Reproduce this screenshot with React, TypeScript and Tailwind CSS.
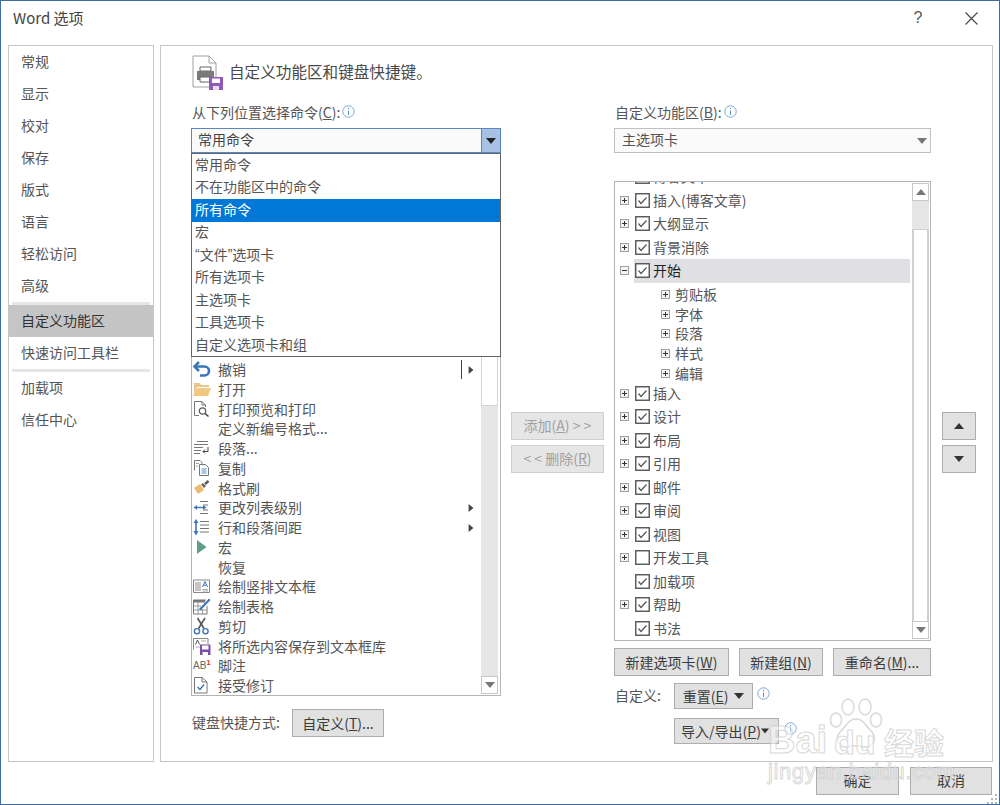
import type { ReactNode } from "react";

const sideTop = ["常规", "显示", "校对", "保存", "版式", "语言", "轻松访问", "高级"];

const dropItems: ReactNode[] = [
  "常用命令",
  "不在功能区中的命令",
  "所有命令",
  "宏",
  <>
    <span style={{ fontFamily: '"Liberation Sans", sans-serif' }}>“</span>文件
    <span style={{ fontFamily: '"Liberation Sans", sans-serif' }}>”</span>选项卡
  </>,
  "所有选项卡",
  "主选项卡",
  "工具选项卡",
  "自定义选项卡和组",
];

const hiddenRows = ["<分隔符>", "保存", "编号", "查看宏", "插入分页符和分节符", "插入图片", "插入文本框", "超链接", "查找"];

function Svg({ children }: { children: ReactNode }) {
  return (
    <svg width="20" height="19" viewBox="0 0 20 19" fill="none">
      {children}
    </svg>
  );
}

const icons: Record<string, ReactNode> = {
  undo: (
    <Svg>
      <path d="M7 2 L2.5 6.5 L7 11" stroke="#3a76b8" strokeWidth="2.6" />
      <path d="M3 6.5 H12.5 a4.4 4.4 0 0 1 0 9 H8" stroke="#3a76b8" strokeWidth="2.6" />
    </Svg>
  ),
  open: (
    <Svg>
      <path d="M2 5 L2 3 L8 3 L9 5 L17 5 L17 7 L5 7 L2 15 Z" fill="#e8c68e" />
      <path d="M5 8 L19 8 L16 16 L1 16 Z" fill="#f2c77f" />
    </Svg>
  ),
  preview: (
    <Svg>
      <path d="M2.5 15.5 V1.5 H10 L13.5 5 V7 M10 1.5 V5 H13.5 M2.5 15.5 H7" stroke="#777" />
      <circle cx="10.5" cy="11" r="3.2" stroke="#555" strokeWidth="1.2" />
      <path d="M13 13.5 L16.5 16.5" stroke="#444" strokeWidth="1.6" />
    </Svg>
  ),
  para: (
    <Svg>
      <path d="M5 2.5 H16 M2 5.5 H16 M2 8.5 H11 M2 11.5 H9 M2 14.5 H8" stroke="#777" />
      <path d="M16 8 V12.5 H11 M13 10.5 L11 12.5 L13 14.5" stroke="#444" />
    </Svg>
  ),
  copy: (
    <Svg>
      <path d="M2.5 11.5 V1.5 H8 L10 3.5 V5" stroke="#777" />
      <path d="M4 4.5 H7 M4 7 H6" stroke="#9a9a9a" />
      <path d="M7.5 16.5 V5.5 H13.5 L16.5 8.5 V16.5 Z" fill="#fff" stroke="#777" />
      <path d="M9.5 10 H14.5 M9.5 12 H14.5 M9.5 14 H14.5" stroke="#4f8dc9" />
    </Svg>
  ),
  brush: (
    <Svg>
      <path d="M2 9 L8 5 L12 11 L6 15 Z" fill="#ecbc6c" />
      <path d="M9 5.5 L12 9 L14 7 L11 4 Z" fill="#666" />
      <path d="M13 5 L16.5 2" stroke="#555" strokeWidth="2.4" />
    </Svg>
  ),
  level: (
    <Svg>
      <path d="M8 3.5 H16 M11 7 H16 M11 12 H16 M8 15.5 H16" stroke="#777" />
      <path d="M2 9.5 H14" stroke="#3a76b8" strokeWidth="1.4" />
      <path d="M5 7 L2 9.5 L5 12 Z M11 7 L14 9.5 L11 12 Z" fill="#3a76b8" />
    </Svg>
  ),
  spacing: (
    <Svg>
      <path d="M8 3.5 H17 M8 7 H17 M8 10.5 H17 M8 14 H17" stroke="#777" />
      <path d="M4 3 V16" stroke="#3a76b8" strokeWidth="1.6" />
      <path d="M1.5 5 L4 1 L6.5 5 Z M1.5 13 L4 17.5 L6.5 13 Z" fill="#3a76b8" />
    </Svg>
  ),
  macro: (
    <Svg>
      <path d="M5 2 L14.5 9 L5 16 Z" fill="#5f9f87" />
    </Svg>
  ),
  vtext: (
    <Svg>
      <path d="M1.5 3 H17.5 V15.5 H1.5 Z" fill="#fff" stroke="#888" />
      <path d="M4 5 V14 M6 5 V14 M8 5 V14" stroke="#8a8a8a" />
      <path d="M10.5 10 L13 4.5 L15.5 10 M11.5 8.2 H14.5" stroke="#3a76b8" />
      <path d="M10.5 12.5 H16 M10.5 14 H16" stroke="#aaa" />
    </Svg>
  ),
  table: (
    <Svg>
      <path d="M1.5 3 H14 M1.5 3 V17 H15 V9" stroke="#777" />
      <path d="M1.5 3 H13 V5.5 H1.5 Z" fill="#777" />
      <path d="M1.5 9 H9 M1.5 13 H15 M6 5 V17 M10.5 12 V17" stroke="#999" />
      <path d="M7 12 L17 1.5 L18.5 3 L8.5 13.5 Z" fill="#3a76b8" />
    </Svg>
  ),
  cut: (
    <Svg>
      <path d="M5.5 1 L12 11.5 M13 1 L6.5 11.5" stroke="#555" strokeWidth="1.6" />
      <circle cx="5" cy="14.2" r="2.6" stroke="#3a76b8" strokeWidth="1.4" />
      <circle cx="13.5" cy="14.2" r="2.6" stroke="#3a76b8" strokeWidth="1.4" />
    </Svg>
  ),
  saveSel: (
    <Svg>
      <path d="M1.5 12.5 V1.5 H16 V7" stroke="#888" />
      <path d="M3.5 7.5 L5.5 3 L7.5 7.5" stroke="#555" />
      <path d="M9 4 H14 M3.5 10 H8" stroke="#aaa" />
      <path d="M8 7.5 H18.5 V18 H8 Z" fill="#7b4fa3" />
      <path d="M10 8.5 H16.5 V12.5 H10 Z" fill="#fff" />
      <path d="M10.5 15 H16 V18 H10.5 Z" fill="#fff" />
    </Svg>
  ),
  accept: (
    <Svg>
      <path d="M2.5 17 V1.5 H10 L15 6 V17 Z" stroke="#777" />
      <path d="M10 1.5 V6 H15" stroke="#777" />
      <path d="M5.5 11 L8 13.5 L12 8.5" stroke="#3a76b8" strokeWidth="1.5" />
    </Svg>
  ),
};

type Cmd = { label: string; icon?: string; split?: boolean; arrow?: boolean; note?: boolean };

const commands: Cmd[] = [
  { label: "撤销", icon: "undo", split: true },
  { label: "打开", icon: "open" },
  { label: "打印预览和打印", icon: "preview" },
  { label: "定义新编号格式..." },
  { label: "段落...", icon: "para" },
  { label: "复制", icon: "copy" },
  { label: "格式刷", icon: "brush" },
  { label: "更改列表级别", icon: "level", arrow: true },
  { label: "行和段落间距", icon: "spacing", arrow: true },
  { label: "宏", icon: "macro" },
  { label: "恢复" },
  { label: "绘制竖排文本框", icon: "vtext" },
  { label: "绘制表格", icon: "table" },
  { label: "剪切", icon: "cut" },
  { label: "将所选内容保存到文本框库", icon: "saveSel" },
  { label: "脚注", note: true },
  { label: "接受修订", icon: "accept" },
];

const tabsTop = [
  { label: "插入(博客文章)", on: true },
  { label: "大纲显示", on: true },
  { label: "背景消除", on: true },
];

const tabsBottom = [
  { label: "插入", on: true, plus: true },
  { label: "设计", on: true, plus: true },
  { label: "布局", on: true, plus: true },
  { label: "引用", on: true, plus: true },
  { label: "邮件", on: true, plus: true },
  { label: "审阅", on: true, plus: true },
  { label: "视图", on: true, plus: true },
  { label: "开发工具", on: false, plus: true },
  { label: "加载项", on: true, plus: false },
  { label: "帮助", on: true, plus: true },
  { label: "书法", on: true, plus: false },
];

function Caret({ dir, color = "#444", size = 10 }: { dir: "up" | "down" | "right"; color?: string; size?: number }) {
  const d = dir === "up" ? "M0 8 L5 2 L10 8 Z" : dir === "down" ? "M0 2 L10 2 L5 8 Z" : "M2 0 L8 5 L2 10 Z";
  return (
    <svg width={size} height={size} viewBox="0 0 10 10">
      <path d={d} fill={color} />
    </svg>
  );
}

function Info() {
  return (
    <svg width="13" height="13" viewBox="0 0 13 13" fill="none" className="shrink-0">
      <circle cx="6.5" cy="6.5" r="5.7" stroke="#7da7d9" />
      <path d="M6.5 5.5 V10" stroke="#5f8fc9" />
      <path d="M6.5 3 V4.2" stroke="#5f8fc9" />
    </svg>
  );
}

function Expander({ open = false }: { open?: boolean }) {
  return (
    <svg width="9" height="9" viewBox="0 0 9 9" fill="none" className="shrink-0">
      <rect x="0.5" y="0.5" width="8" height="8" fill="#f4f4f4" stroke="#a0a0a0" />
      <path d="M2 4.5 H7" stroke="#333" />
      {!open && <path d="M4.5 2 V7" stroke="#333" />}
    </svg>
  );
}

function Check({ on }: { on: boolean }) {
  return (
    <svg width="15" height="15" viewBox="0 0 15 15" fill="none" className="shrink-0">
      <rect x="0.75" y="0.75" width="13.5" height="13.5" fill="#fff" stroke="#555" strokeWidth="1.4" />
      {on && <path d="M3.5 7.5 L6 10.5 L11.5 4.5" stroke="#555" strokeWidth="1.2" />}
    </svg>
  );
}

function TabRow({ label, on, plus }: { label: string; on: boolean; plus: boolean }) {
  return (
    <div className="flex items-center h-[23.5px] pl-[5px] shrink-0">
      <div className="w-[9px] shrink-0">{plus && <Expander />}</div>
      <div className="ml-[6px]">
        <Check on={on} />
      </div>
      <span className="ml-[3px] whitespace-nowrap">{label}</span>
    </div>
  );
}

function Btn({ className, children }: { className: string; children: ReactNode }) {
  return (
    <div className={`flex items-center justify-center bg-[#e1e1e1] border border-[#adadad] text-[#3c3c3c] whitespace-nowrap ${className}`}>
      {children}
    </div>
  );
}

export default function App() {
  return (
    <div
      className="relative flex flex-col w-[1000px] h-[805px] overflow-hidden bg-white border border-[#3f6aa8] text-[14px] text-[#555]"
      style={{ fontFamily: '"Noto Sans CJK SC", "Liberation Sans", sans-serif' }}
    >
      {/* title bar */}
      <div className="flex items-center h-[44px] shrink-0 pl-[12px] pb-[10px] text-[15px] text-[#444]">
        <span className="flex-1">Word 选项</span>
        <span className="w-[20px] mr-[37px] text-center text-[16px] text-[#555]" style={{ fontFamily: '"Liberation Sans", sans-serif' }}>
          ?
        </span>
        <svg width="13" height="13" viewBox="0 0 13 13" className="mr-[21px]">
          <path d="M0.5 0.5 L12.5 12.5 M12.5 0.5 L0.5 12.5" stroke="#444" strokeWidth="1.1" />
        </svg>
      </div>

      <div className="flex h-[717px] shrink-0 pl-[7px] gap-[6px]">
        {/* sidebar */}
        <div className="flex flex-col w-[146px] border border-[#c6c6c6]">
          {sideTop.map((s) => (
            <div key={s} className="flex items-center h-[32px] pl-[12px] pb-[2px] shrink-0">
              {s}
            </div>
          ))}
          <div className="h-[3px] mx-[3px] bg-[#e6e6e6] shrink-0" />
          <div className="flex items-center h-[32px] pl-[12px] pb-[2px] bg-[#c5c5c5] text-[#333] shrink-0">自定义功能区</div>
          <div className="flex items-center h-[32px] pl-[12px] pb-[2px] shrink-0">快速访问工具栏</div>
          <div className="h-[3px] mx-[3px] bg-[#e6e6e6] shrink-0" />
          <div className="flex items-center h-[32px] pl-[12px] pb-[2px] shrink-0">加载项</div>
          <div className="flex items-center h-[32px] pl-[12px] pb-[2px] shrink-0">信任中心</div>
        </div>

        {/* main panel */}
        <div className="w-[833px] border border-[#c6c6c6] pl-[30px]">
          <div className="flex items-center h-[36px] mt-[9px] pl-[1px]">
            <svg width="32" height="36" viewBox="0 0 32 36" fill="none">
              <path d="M1 32 V1 H17 L24 8 V22 M17 1 V8 H24 M1 32 H17" stroke="#a0a0a0" />
              <path d="M8 12 H19 V16 H8 Z" fill="#fff" stroke="#666" />
              <path d="M5 16 H22 V25 H5 Z" fill="#7a7a7a" />
              <path d="M8 22 H19 V27 H8 Z" fill="#fff" stroke="#666" />
              <path d="M17 22 H31 V35 H17 Z" fill="#8f5bb5" />
              <path d="M20 23.5 H28 V28 H20 Z" fill="#fff" />
              <path d="M21 31 H27 V35 H21 Z" fill="#e9def2" />
            </svg>
            <span className="ml-[5px] pb-[3px] text-[15.6px] text-[#4a4a4a] whitespace-nowrap">自定义功能区和键盘快捷键。</span>
          </div>

          <div className="flex mt-[13px]">
            {/* commands column */}
            <div className="flex flex-col w-[310px] shrink-0">
              <div className="flex h-[18px] items-center pb-[2px] whitespace-nowrap">
                <span className="pl-[1px]">
                  从下列位置选择命令(<u>C</u>):
                </span>
                <span className="ml-[2px] -mt-[2px]">
                  <Info />
                </span>
              </div>
              <div className="relative mt-[6px]">
                <div className="flex h-[25px] border border-[#5b87c5] bg-[#fafafa]">
                  <span className="flex-1 flex items-center pl-[6px] pb-[2px] text-[#444]">常用命令</span>
                  <div className="flex items-center justify-center w-[19px] bg-[#a9c1e3] border-l border-[#5b87c5]">
                    <Caret dir="down" color="#222" />
                  </div>
                </div>
                <div className="absolute left-0 top-[25px] z-10 w-[310px] h-[204px] bg-white border border-[#646464]">
                  {dropItems.map((d, i) => (
                    <div
                      key={i}
                      className={`flex items-center h-[22.5px] pl-[3px] pb-[2px] whitespace-pre ${i === 2 ? "bg-[#0078d7] text-white" : ""}`}
                    >
                      {d}
                    </div>
                  ))}
                </div>
              </div>
              <div className="flex h-[515px] mt-[28px] border border-[#b4b4b4] pr-[2px] overflow-hidden">
                <div className="flex-1 min-w-0 overflow-hidden">
                  {hiddenRows.map((r) => (
                    <div key={r} className="flex items-center h-[19.75px] pl-[26px]">
                      {r}
                    </div>
                  ))}
                  {commands.map((c) => (
                    <div key={c.label} className="flex items-center h-[19.75px] whitespace-nowrap">
                      <div className="flex items-center w-[26px] h-full shrink-0">
                        {c.icon && icons[c.icon]}
                        {c.note && (
                          <span className="pl-[1px] text-[10px] text-[#666]" style={{ fontFamily: '"Liberation Sans", sans-serif' }}>
                            AB<sup className="text-[8px] text-[#d9412b] font-bold">1</sup>
                          </span>
                        )}
                      </div>
                      <span className="flex-1">{c.label}</span>
                      {c.split && <div className="w-px h-[19px] bg-[#444] mr-[5px]" />}
                      {(c.split || c.arrow) && (
                        <div className="mr-[6px]">
                          <Caret dir="right" size={8} />
                        </div>
                      )}
                    </div>
                  ))}
                </div>
                <div className="flex flex-col w-[17px] shrink-0 bg-[#e6e6e6] my-[1px]">
                  <div className="h-[223px] shrink-0 bg-white border border-[#d4d4d4]" />
                  <div className="flex-1" />
                  <div className="flex items-center justify-center h-[18px] shrink-0 bg-white border border-[#c8c8c8]">
                    <Caret dir="down" color="#777" />
                  </div>
                </div>
              </div>
              <div className="flex items-center mt-[13px] pl-[1px]">
                <span className="w-[100px] pb-[2px]">键盘快捷方式:</span>
                <Btn className="w-[92px] h-[28px]">
                  自定义(<u>T</u>)...
                </Btn>
              </div>
            </div>

            {/* add / remove */}
            <div className="flex flex-col gap-[5px] ml-[10px] w-[93px] pt-[308px] shrink-0">
              <div className="flex items-center justify-center h-[28px] pb-[2px] bg-[#e6e6e6] border border-[#cfcfcf] text-[#a0a0a0]">
                添加(<u>A</u>) &gt; &gt;
              </div>
              <div className="flex items-center justify-center h-[28px] pb-[2px] bg-[#e6e6e6] border border-[#cfcfcf] text-[#a0a0a0]">
                &lt; &lt; 删除(<u>R</u>)
              </div>
            </div>

            {/* ribbon column */}
            <div className="flex flex-col ml-[10px] w-[317px] shrink-0">
              <div className="flex h-[18px] items-center pl-[1px] pb-[2px] whitespace-nowrap">
                自定义功能区(<u>B</u>):
                <span className="ml-[2px] -mt-[2px]">
                  <Info />
                </span>
              </div>
              <div className="flex items-center h-[25px] mt-[6px] border border-[#c0c0c0] bg-[#fafafa] pl-[7px] pr-[3px]">
                <span className="flex-1 pb-[2px]">主选项卡</span>
                <Caret dir="down" color="#777" />
              </div>
              <div className="flex h-[460px] mt-[28px] border border-[#b4b4b4] overflow-hidden">
                <div className="flex-1 min-w-0 overflow-hidden">
                  <div className="-mt-[17px]">
                    <TabRow label="博客文章" on plus />
                    {tabsTop.map((t) => (
                      <TabRow key={t.label} label={t.label} on={t.on} plus />
                    ))}
                    <div className="flex items-center h-[23.5px] pl-[5px]">
                      <Expander open />
                      <div className="flex items-center flex-1 h-full ml-[5px] mr-[2px] pl-[1px] bg-[#e0e0e4] text-[#222]">
                        <Check on />
                        <span className="ml-[3px]">开始</span>
                      </div>
                    </div>
                    <div className="pt-[2px] -mb-[2px]">
                      {["剪贴板", "字体", "段落", "样式", "编辑"].map((c) => (
                        <div key={c} className="flex items-center h-[19.75px] pl-[46px]">
                          <Expander />
                          <span className="ml-[5px]">{c}</span>
                        </div>
                      ))}
                    </div>
                    {tabsBottom.map((t) => (
                      <TabRow key={t.label} label={t.label} on={t.on} plus={t.plus} />
                    ))}
                  </div>
                </div>
                <div className="flex flex-col w-[17px] shrink-0 mr-[1px] my-[1px]">
                  <div className="flex items-center justify-center h-[18px] shrink-0 bg-white border border-[#c8c8c8]">
                    <Caret dir="up" color="#777" />
                  </div>
                  <div className="h-[28px] shrink-0 bg-[#e6e6e6]" />
                  <div className="flex-1 bg-white border-x-2 border-t border-[#d0d0d0]" />
                  <div className="flex items-center justify-center h-[18px] shrink-0 bg-white border border-[#c8c8c8]">
                    <Caret dir="down" color="#777" />
                  </div>
                </div>
              </div>
              <div className="flex justify-between mt-[7px]">
                <Btn className="w-[115px] h-[28px]">
                  新建选项卡(<u>W</u>)
                </Btn>
                <Btn className="w-[84px] h-[28px]">
                  新建组(<u>N</u>)
                </Btn>
                <Btn className="w-[98px] h-[28px]">
                  重命名(<u>M</u>)...
                </Btn>
              </div>
              <div className="flex items-center mt-[7px] pl-[1px]">
                <span className="w-[59px] pb-[2px]">自定义:</span>
                <Btn className="w-[79px] h-[26px] gap-[6px]">
                  <span>
                    重置(<u>E</u>)
                  </span>
                  <Caret dir="down" color="#333" />
                </Btn>
                <span className="ml-[4px] -mt-[6px]">
                  <Info />
                </span>
              </div>
              <div className="flex items-center mt-[9px] pl-[60px]">
                <Btn className="w-[105px] h-[26px] justify-between pl-[3px] pr-[6px]">
                  <span>
                    导入/导出(<u>P</u>)
                  </span>
                  <Caret dir="down" color="#333" size={8} />
                </Btn>
                <span className="ml-[5px] -mt-[6px]">
                  <Info />
                </span>
              </div>
            </div>

            {/* move up / down */}
            <div className="flex flex-col gap-[5px] ml-[11px] w-[34px] pt-[308px] shrink-0">
              <Btn className="h-[28px]">
                <Caret dir="up" color="#333" />
              </Btn>
              <Btn className="h-[28px]">
                <Caret dir="down" color="#333" />
              </Btn>
            </div>
          </div>
        </div>
      </div>

      {/* footer */}
      <div className="flex justify-end gap-[11px] pt-[5px] pr-[7px]">
        <Btn className="w-[83px] h-[28px] pb-[2px]">确定</Btn>
        <Btn className="w-[82px] h-[28px] pb-[2px]">取消</Btn>
      </div>

      {/* resize grip */}
      <svg width="12" height="12" viewBox="0 0 12 12" className="absolute right-0 bottom-0">
        <path d="M8 2 h2 v2 h-2 Z M4 6 h2 v2 h-2 Z M8 6 h2 v2 h-2 Z M0 10 h2 v2 h-2 Z M4 10 h2 v2 h-2 Z M8 10 h2 v2 h-2 Z" fill="#b8b8b8" />
      </svg>

      {/* baidu watermark */}
      <div className="absolute left-[767px] top-[697px] w-[180px] h-[90px] z-20 opacity-80 text-white/60 [-webkit-text-stroke:1px_#d0d0d0]">
        <svg width="52" height="52" viewBox="0 0 52 52" className="absolute left-[62px] top-0" fill="rgba(255,255,255,0.6)" stroke="#d0d0d0" strokeWidth="1.5">
          <ellipse cx="18" cy="9" rx="6" ry="8" />
          <ellipse cx="35" cy="9" rx="6" ry="8" />
          <ellipse cx="6" cy="22" rx="5.5" ry="7" />
          <ellipse cx="46" cy="22" rx="5.5" ry="7" />
          <path d="M26 21 C34 21 36 29 42 34 C48 42 42 50 34 49 C28 47 24 47 18 49 C10 50 4 42 10 34 C16 29 18 21 26 21 Z" />
        </svg>
        <span className="absolute left-0 top-[20px] text-[38px] leading-[44px] font-bold" style={{ fontFamily: '"Liberation Sans", sans-serif' }}>
          Bai
        </span>
        <span className="absolute left-[66px] top-[24px] text-[34px] leading-[40px] font-bold" style={{ fontFamily: '"Liberation Sans", sans-serif' }}>
          du
        </span>
        <span className="absolute left-[116px] top-[26px] text-[30px] leading-[34px] font-bold whitespace-nowrap">经验</span>
        <span className="absolute left-0 top-[62px] text-[22px] leading-[24px] whitespace-nowrap tracking-[0.6px]" style={{ fontFamily: '"Liberation Sans", sans-serif' }}>
          jingyan.baidu.com
        </span>
      </div>
    </div>
  );
}
